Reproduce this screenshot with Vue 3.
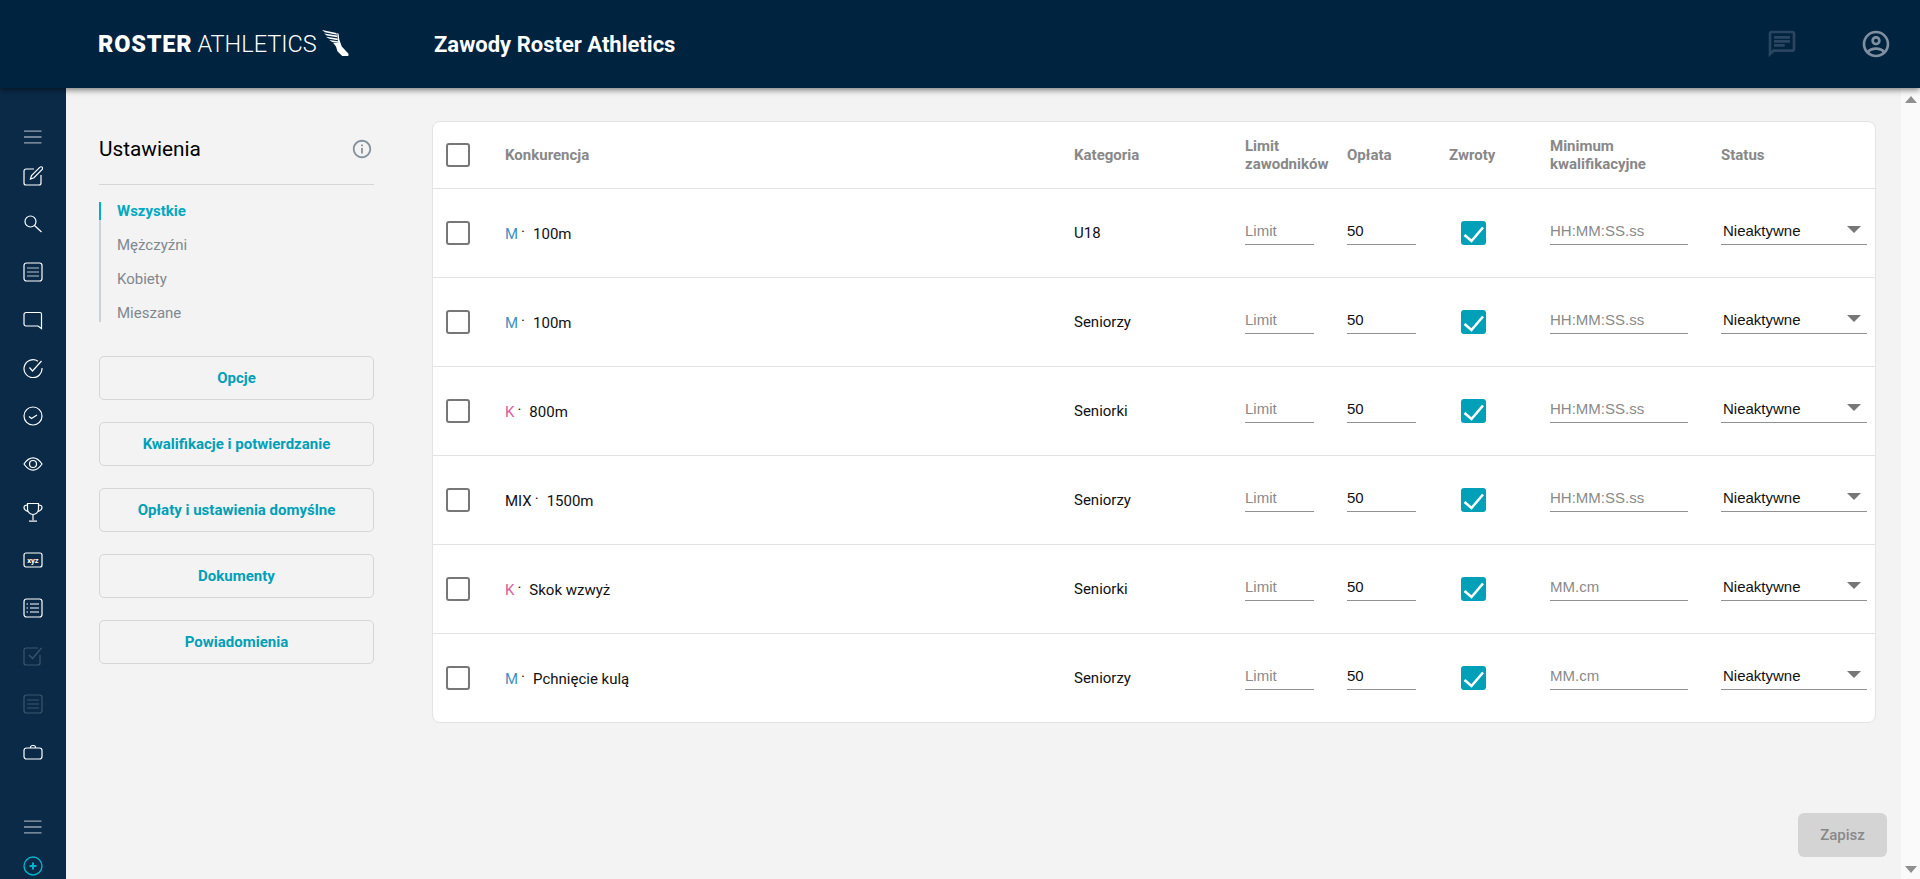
<script setup>
const navItems = ['Wszystkie', 'Mężczyźni', 'Kobiety', 'Mieszane']
const buttons = ['Opcje', 'Kwalifikacje i potwierdzanie', 'Opłaty i ustawienia domyślne', 'Dokumenty', 'Powiadomienia']
const rows = [
  { g: 'M', cls: 'male', name: '100m', cat: 'U18', min: 'HH:MM:SS.ss' },
  { g: 'M', cls: 'male', name: '100m', cat: 'Seniorzy', min: 'HH:MM:SS.ss' },
  { g: 'K', cls: 'female', name: '800m', cat: 'Seniorki', min: 'HH:MM:SS.ss' },
  { g: 'MIX', cls: 'mix', name: '1500m', cat: 'Seniorzy', min: 'HH:MM:SS.ss' },
  { g: 'K', cls: 'female', name: 'Skok wzwyż', cat: 'Seniorki', min: 'MM.cm' },
  { g: 'M', cls: 'male', name: 'Pchnięcie kulą', cat: 'Seniorzy', min: 'MM.cm' }
]
</script>

<template>
  <div class="app">
    <header class="topbar">
      <div class="logo">
        <span class="logo-bold">ROSTER</span>
        <span class="logo-thin">ATHLETICS</span>
        <svg class="wing" viewBox="0 0 28 28" width="27" height="27" fill="#fff">
          <path d="M0 0L15 3L15.500 4.800L3 2.300Z" />
          <path d="M2 3.500L15.800 5.800L16 7.600L5 5.800Z" />
          <path d="M4 7L16.200 8.800L16.500 10.500L7.500 9.200Z" />
          <path d="M7.500 10.300L16.600 11.600L16.800 13.200L10.500 12.500Z" />
          <path d="M15.800 3L17.200 4L18 10L20.500 17L27.500 24.500L27.300 27L21 27L16 22L14.500 17L11.500 13.300L16.800 13.500Z" />
        </svg>
      </div>
      <div class="app-title">Zawody Roster Athletics</div>
      <div class="top-icons">
        <svg class="top-chat" viewBox="0 0 24 24" width="32" height="32">
          <path d="M20 2H4c-1.100 0-1.990.900-1.990 2L2 22l4-4h14c1.100 0 2-.900 2-2V4c0-1.100-.900-2-2-2zm0 14H5.170L4 17.170V4h16v12zM6 12h8v2H6zm0-3h12v2H6zm0-3h12v2H6z" />
        </svg>
        <svg class="top-user" viewBox="0 0 24 24" width="32" height="32">
          <path d="M12 2C6.480 2 2 6.480 2 12s4.480 10 10 10 10-4.480 10-10S17.520 2 12 2zM7.070 18.280c.430-.900 3.050-1.780 4.930-1.780s4.510.880 4.930 1.780C15.570 19.360 13.860 20 12 20s-3.570-.640-4.930-1.720zm11.290-1.450c-1.430-1.740-4.900-2.330-6.360-2.330s-4.930.590-6.360 2.330C4.620 15.490 4 13.820 4 12c0-4.410 3.590-8 8-8s8 3.590 8 8c0 1.820-.620 3.490-1.640 4.830zM12 6c-1.940 0-3.500 1.560-3.500 3.500S10.060 13 12 13s3.500-1.560 3.500-3.500S13.940 6 12 6zm0 5c-.830 0-1.500-.670-1.500-1.500S11.170 8 12 8s1.500.670 1.500 1.500S12.830 11 12 11z" />
        </svg>
      </div>
    </header>

    <div class="body">
      <aside class="sidebar">
        <div class="side-item short">
          <svg class="ico dim" viewBox="0 0 20 20"><path d="M1 4.200H18.500M1 10H18.500M1 15.800H18.500" /></svg>
        </div>
        <div class="side-item">
          <svg class="ico" viewBox="0 0 20 20"><path d="M11 3H3a2 2 0 0 0-2 2V17a2 2 0 0 0 2 2H16a2 2 0 0 0 2-2V9" /><path d="M7.500 13l1-3.500L17 1.200a1.500 1.500 0 0 1 2.200 2.100L11 11.700z" /></svg>
        </div>
        <div class="side-item">
          <svg class="ico" viewBox="0 0 20 20"><circle cx="7.500" cy="7.500" r="5.500" /><path d="M11.500 11.500L18.500 18" /></svg>
        </div>
        <div class="side-item">
          <svg class="ico" viewBox="0 0 20 20"><rect x="1" y="1" width="18" height="18" rx="2.500" /><path d="M4 6H16M4 10H16M4 14H16" class="soft" /></svg>
        </div>
        <div class="side-item">
          <svg class="ico" viewBox="0 0 20 20"><path d="M3 2.500H17a1.500 1.500 0 0 1 1.500 1.500V18.500L15 16H3a2 2 0 0 1-2-2V4.500a2 2 0 0 1 2-2z" /></svg>
        </div>
        <div class="side-item">
          <svg class="ico" viewBox="0 0 20 20"><path d="M15 3.200A9 9 0 1 0 19 10" /><path d="M6.500 9.500L9.500 13L18.500 3" /></svg>
        </div>
        <div class="side-item">
          <svg class="ico" viewBox="0 0 20 20"><circle cx="10" cy="10" r="9" /><path d="M6 10.500L8.500 12.500L14 9" /></svg>
        </div>
        <div class="side-item">
          <svg class="ico" viewBox="0 0 20 20"><path d="M1 10C4 5.500 7 3.800 10 3.800S16 5.500 19 10C16 14.500 13 16.200 10 16.200S4 14.500 1 10z" /><circle cx="10" cy="10" r="3.500" /></svg>
        </div>
        <div class="side-item">
          <svg class="ico" viewBox="0 0 20 20"><path d="M4.500 1.500H15.500V7a5.500 5.500 0 0 1-11 0z" /><path d="M4.500 3C2 3 1 4 1 5.500s1.200 3 4 4M15.500 3c2.500 0 3.500 1 3.500 2.500s-1.200 3-4 4M10 12.500V18.500" /><path d="M6 19.300H14" class="soft" stroke-width="2" /></svg>
        </div>
        <div class="side-item">
          <svg class="ico" viewBox="0 0 20 20"><rect x="1" y="3" width="18" height="14" rx="2" /><text x="10" y="12.800" text-anchor="middle" class="xyz">xyz</text></svg>
        </div>
        <div class="side-item">
          <svg class="ico" viewBox="0 0 20 20"><rect x="1" y="1" width="18" height="18" rx="2.500" /><path d="M7 6H16M7 10H16M7 14H16" /><path d="M3.500 6H5M3.500 10H5M3.500 14H5" /></svg>
        </div>
        <div class="side-item">
          <svg class="ico off" viewBox="0 0 20 20"><path d="M15 2H3a2 2 0 0 0-2 2V17a2 2 0 0 0 2 2H15a2 2 0 0 0 2-2V9" /><path d="M6 9L9.500 12.500L18.500 2" /></svg>
        </div>
        <div class="side-item">
          <svg class="ico off" viewBox="0 0 20 20"><rect x="1" y="1" width="18" height="18" rx="2.500" /><path d="M4 6H16M4 10H16M4 14H16" /></svg>
        </div>
        <div class="side-item">
          <svg class="ico" viewBox="0 0 20 20"><rect x="1" y="6" width="18" height="11" rx="2.500" /><path d="M7.500 6V5.500a2 2 0 0 1 2-2h1a2 2 0 0 1 2 2V6" /></svg>
        </div>
        <div class="side-item short bottom">
          <svg class="ico dim" viewBox="0 0 20 20"><path d="M1 4.200H18.500M1 10H18.500M1 15.800H18.500" /></svg>
        </div>
        <div class="side-item">
          <svg class="ico teal" viewBox="0 0 20 20"><circle cx="10" cy="10" r="9" /><path d="M6.500 10H13.500M10 6.500V13.500" stroke-width="2" /></svg>
        </div>
      </aside>

      <main class="main">
        <section class="panel">
          <div class="panel-head">
            <h2 class="panel-title">Ustawienia</h2>
            <svg class="info" viewBox="0 0 24 24" width="22" height="22">
              <path d="M11 7h2v2h-2zm0 4h2v6h-2zm1-9C6.480 2 2 6.480 2 12s4.480 10 10 10 10-4.480 10-10S17.520 2 12 2zm0 18c-4.410 0-8-3.590-8-8s3.590-8 8-8 8 3.590 8 8-3.590 8-8 8z" />
            </svg>
          </div>
          <nav class="nav">
            <a v-for="(n, i) in navItems" :key="n" class="nav-item" :class="{ active: i === 0 }">{{ n }}</a>
          </nav>
          <div class="btns">
            <button v-for="b in buttons" :key="b" class="side-btn">{{ b }}</button>
          </div>
        </section>

        <section class="card">
          <div class="row head">
            <div><span class="box"></span></div>
            <div>Konkurencja</div>
            <div>Kategoria</div>
            <div>Limit<br />zawodników</div>
            <div>Opłata</div>
            <div>Zwroty</div>
            <div>Minimum<br />kwalifikacyjne</div>
            <div>Status</div>
          </div>
          <div v-for="(r, i) in rows" :key="i" class="row item">
            <div><span class="box"></span></div>
            <div class="event">
              <span :class="r.cls">{{ r.g }}</span><span class="dot">·</span><span>{{ r.name }}</span>
            </div>
            <div class="cat">{{ r.cat }}</div>
            <div><div class="field short-f ph">Limit</div></div>
            <div><div class="field short-f">50</div></div>
            <div>
              <span class="box checked">
                <svg viewBox="0 0 25 24" width="25" height="24"><path d="M3.500 14L10.500 20L22 6.500" fill="none" stroke="#fff" stroke-width="2.600" /></svg>
              </span>
            </div>
            <div><div class="field mid-f ph">{{ r.min }}</div></div>
            <div>
              <div class="field sel-f">Nieaktywne<span class="caret"></span></div>
            </div>
          </div>
        </section>

        <button class="save">Zapisz</button>
      </main>

      <div class="scroll">
        <span class="arrow up"></span>
        <span class="arrow down"></span>
      </div>
    </div>
  </div>
</template>

<style>
html, body { margin: 0; padding: 0; height: 100%; overflow: hidden; }
</style>

<style scoped>
.app {
  height: 879px;
  display: flex;
  flex-direction: column;
  overflow: hidden;
  font-family: Roboto, "Liberation Sans", sans-serif;
  font-size: 15px;
  color: #111;
}
.topbar {
  height: 88px;
  flex: none;
  background: #002340;
  display: flex;
  align-items: center;
  box-shadow: 0 2px 6px rgba(0, 0, 0, 0.5);
  position: relative;
  z-index: 2;
}
.logo {
  margin-left: 98px;
  width: 336px;
  display: flex;
  align-items: center;
  color: #fff;
  font-size: 23.500px;
  line-height: 28px;
}
.logo-bold { font-weight: 900; letter-spacing: 0.800px; }
.logo-thin { font-weight: 300; margin-left: 5px; }
.wing { margin-left: 5px; margin-top: -1px; }
.app-title {
  font-size: 22px;
  font-weight: 700;
  color: #fff;
}
.top-icons {
  margin-left: auto;
  margin-right: 28px;
  display: flex;
  align-items: center;
  gap: 62px;
}
.top-chat { fill: #2a4560; }
.top-user { fill: #7f8f9f; }

.body { flex: 1; display: flex; min-height: 0; }

.sidebar {
  width: 66px;
  flex: none;
  background: #0a2a47;
  padding-top: 34px;
  box-sizing: border-box;
  display: flex;
  flex-direction: column;
  overflow: hidden;
}
.side-item {
  height: 48px;
  flex: none;
  display: flex;
  align-items: center;
  justify-content: center;
}
.side-item.short { height: 30px; }
.side-item.bottom { margin-top: 36px; }
.ico {
  width: 20px;
  height: 20px;
  fill: none;
  stroke: #fff;
  stroke-width: 1.2;
}
.ico .soft { stroke: #b8c2cc; }
.ico.dim { stroke: #97a4b1; stroke-width: 1.3; }
.ico.off { stroke: #3c566f; }
.ico.teal { stroke: #00b4cc; stroke-width: 1.4; }
.xyz {
  fill: #fff;
  stroke: none;
  font-family: Roboto, sans-serif;
  font-size: 7.500px;
  font-weight: 700;
}

.main {
  flex: 1;
  min-width: 0;
  background: #f3f3f3;
  position: relative;
  padding: 33px 25px 0 33px;
  box-sizing: border-box;
  display: flex;
  align-items: flex-start;
  gap: 58px;
}
.panel { width: 275px; flex: none; }
.panel-head {
  height: 55px;
  padding-bottom: 8px;
  display: flex;
  align-items: center;
  justify-content: space-between;
  border-bottom: 1px solid #d6d6d6;
}
.panel-title {
  margin: 0;
  font-size: 20.800px;
  font-weight: 400;
  color: #000;
}
.info { fill: #85929e; margin-right: 1px; }
.nav {
  margin-top: 17px;
  border-left: 2px solid #cdd2d9;
  display: flex;
  flex-direction: column;
  gap: 16px;
}
.nav-item {
  line-height: 18px;
  padding-left: 16px;
  color: #808890;
}
.nav-item.active {
  margin-left: -2px;
  border-left: 2px solid #00aec8;
  color: #00a9c2;
  font-weight: 700;
}
.btns {
  margin-top: 34px;
  display: flex;
  flex-direction: column;
  gap: 22px;
}
.side-btn {
  height: 44px;
  border: 1px solid #d6d6d6;
  border-radius: 5px;
  background: #f3f3f3;
  color: #00a0b8;
  font-family: inherit;
  font-size: 15px;
  font-weight: 700;
  padding: 0;
}

.card {
  width: 1444px;
  flex: none;
  box-sizing: border-box;
  background: #fff;
  border: 1px solid #e3e3e3;
  border-radius: 8px;
  overflow: hidden;
}
.row {
  display: grid;
  grid-template-columns: 59px 569px 171px 102px 102px 101px 171px 146px;
  padding: 0 8px 0 13px;
  align-items: center;
  box-sizing: border-box;
}
.head {
  height: 66px;
  font-weight: 700;
  color: #888;
  line-height: 18px;
}
.item {
  height: 89px;
  border-top: 1px solid #e3e3e3;
}
.box {
  display: block;
  width: 24px;
  height: 24px;
  box-sizing: border-box;
  border: 2px solid #777;
  border-radius: 3px;
  background: #fff;
}
.box.checked {
  width: 25px;
  height: 24px;
  margin-left: 12px;
  border: none;
  border-radius: 3px;
  background: #00a0b8;
}
.box.checked svg { display: block; }
.event { display: flex; align-items: center; padding-top: 1px; }
.male { color: #3f8fc4; }
.female { color: #d9609a; }
.mix { color: #111; }
.dot { margin: -3px 8px 0 3px; }
.field {
  height: 26px;
  box-sizing: border-box;
  border-bottom: 1px solid #919191;
  font-family: "Liberation Sans", Arial, sans-serif;
  font-size: 15px;
  line-height: 24px;
  color: #111;
  position: relative;
  margin-top: -2px;
}
.short-f { width: 69px; }
.mid-f { width: 138px; }
.ph { color: #8a8a8a; }
.sel-f { padding-left: 2px; }
.caret {
  position: absolute;
  right: 6px;
  top: 7px;
  width: 0;
  height: 0;
  border-left: 7px solid transparent;
  border-right: 7px solid transparent;
  border-top: 7px solid #777;
}

.save {
  position: absolute;
  right: 14px;
  bottom: 22px;
  width: 89px;
  height: 44px;
  border: none;
  border-radius: 6px;
  background: #d4d4d4;
  color: #888;
  font-family: inherit;
  font-size: 15px;
  font-weight: 500;
  padding: 0;
}

.scroll {
  width: 19px;
  flex: none;
  background: #fafafa;
  position: relative;
  display: flex;
  flex-direction: column;
  justify-content: space-between;
  align-items: center;
  padding: 8px 0 6px;
  box-sizing: border-box;
}
.arrow {
  width: 0;
  height: 0;
  border-left: 6.500px solid transparent;
  border-right: 6.500px solid transparent;
}
.arrow.up { border-bottom: 7px solid #8f8f8f; }
.arrow.down { border-top: 7px solid #8f8f8f; }
</style>
